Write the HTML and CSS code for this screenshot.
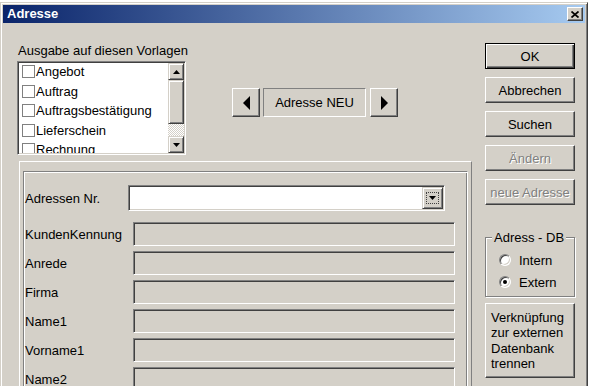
FILE: index.html
```html
<!DOCTYPE html>
<html lang="de">
<head>
  <meta charset="UTF-8">
  <title>Adresse</title>
  <link rel="stylesheet" href="styles.css">
</head>
<body>
  <div class="dialog">
    <div class="titlebar">
      <span class="title">Adresse</span>
      <button class="close">
        <svg width="8" height="7" viewBox="0 0 8 7"><path d="M0.5 0.5 L7.5 6.5 M7.5 0.5 L0.5 6.5" stroke="#000" stroke-width="1.7" fill="none"/></svg>
      </button>
    </div>

    <div class="client">
      <div class="main">
        <div class="top">
          <div class="vorlagen">
            <div class="caption">Ausgabe auf diesen Vorlagen</div>
            <div class="listbox">
              <div class="items">
                <div class="item"><span class="check"></span>Angebot</div>
                <div class="item"><span class="check"></span>Auftrag</div>
                <div class="item"><span class="check"></span>Auftragsbestätigung</div>
                <div class="item"><span class="check"></span>Lieferschein</div>
                <div class="item"><span class="check"></span>Rechnung</div>
              </div>
              <div class="scrollbar">
                <div class="sb-btn"><svg width="7" height="4" viewBox="0 0 7 4"><path d="M3.5 0 L7 4 L0 4 Z" fill="#000"/></svg></div>
                <div class="sb-thumb"></div>
                <div class="sb-track"></div>
                <div class="sb-btn"><svg width="7" height="4" viewBox="0 0 7 4"><path d="M0 0 L7 0 L3.5 4 Z" fill="#000"/></svg></div>
              </div>
            </div>
          </div>

          <div class="nav">
            <button class="nav-btn"><svg width="7" height="14" viewBox="0 0 7 14"><path d="M7 0 L7 14 L0 7 Z" fill="#000"/></svg></button>
            <div class="nav-label">Adresse NEU</div>
            <button class="nav-btn"><svg width="7" height="14" viewBox="0 0 7 14"><path d="M0 0 L7 7 L0 14 Z" fill="#000"/></svg></button>
          </div>
        </div>

        <div class="panel">
          <div class="panel-inner">
            <div class="row combo-row">
              <span class="label combo-label">Adressen Nr.</span>
              <div class="combo">
                <div class="combo-btn">
                  <span class="focus"><svg width="7" height="4" viewBox="0 0 7 4"><path d="M0 0 L7 0 L3.5 4 Z" fill="#000"/></svg></span>
                </div>
              </div>
            </div>
            <div class="row first"><span class="label">KundenKennung</span><div class="field"></div></div>
            <div class="row"><span class="label">Anrede</span><div class="field"></div></div>
            <div class="row"><span class="label">Firma</span><div class="field"></div></div>
            <div class="row"><span class="label">Name1</span><div class="field"></div></div>
            <div class="row"><span class="label">Vorname1</span><div class="field"></div></div>
            <div class="row"><span class="label">Name2</span><div class="field"></div></div>
          </div>
        </div>
      </div>

      <div class="side">
        <button class="btn default">OK</button>
        <button class="btn">Abbrechen</button>
        <button class="btn">Suchen</button>
        <button class="btn disabled">Ändern</button>
        <button class="btn disabled">neue Adresse</button>

        <fieldset class="group">
          <legend>Adress - DB</legend>
          <div class="radio-row"><span class="radio"></span>Intern</div>
          <div class="radio-row"><span class="radio checked"></span>Extern</div>
        </fieldset>

        <button class="btn multi">Verknüpfung<br>zur externen<br>Datenbank<br>trennen</button>
      </div>
    </div>
  </div>
</body>
</html>
```

FILE: styles.css
```css
* {
  box-sizing: border-box;
}
body {
  margin: 0;
  background: #fff;
  font-family: 'Liberation Sans', Arial, sans-serif;
  font-size: 13px;
  color: #000;
  overflow: hidden;
}
button {
  font: inherit;
  color: inherit;
  padding: 0;
}

/* window frame */
.dialog {
  margin-top: 2px;
  width: 588px;
  height: 400px;
  background: #d4d0c8;
  border: 1px solid;
  border-color: #d4d0c8 #404040 #404040 #d4d0c8;
  box-shadow: inset 1px 1px #fff, inset -1px -1px #808080;
  padding: 2px;
}
.titlebar {
  height: 18px;
  background: linear-gradient(to right, #0a246a, #a6caf0);
  display: flex;
  align-items: center;
  justify-content: space-between;
  padding: 0 2px 0 4px;
}
.title {
  color: #fff;
  font-weight: bold;
  line-height: 18px;
}
.close {
  width: 16px;
  height: 14px;
  background: #d4d0c8;
  border: 1px solid;
  border-color: #fff #404040 #404040 #fff;
  box-shadow: inset -1px -1px #808080;
  display: flex;
  align-items: center;
  justify-content: center;
}

.client {
  display: flex;
  padding: 20px 10px 0 14px;
}
.main {
  width: 455px;
}
.top {
  display: flex;
  align-items: flex-start;
}
.vorlagen {
  width: 169px;
}
.caption {
  line-height: 16px;
  margin-bottom: 2px;
  padding-left: 1px;
  white-space: nowrap;
}

/* list with checkboxes */
.listbox {
  height: 94px;
  display: flex;
  background: #fff;
  border: 1px solid;
  border-color: #808080 #fff #fff #808080;
  box-shadow: inset 1px 1px #404040, inset -1px -1px #d4d0c8;
  padding: 1px;
}
.items {
  flex: 1;
  overflow: hidden;
}
.item {
  height: 19.5px;
  display: flex;
  align-items: center;
  gap: 1px;
  padding-left: 3px;
  white-space: nowrap;
}
.item:first-child {
  margin-top: -1px;
}
.check {
  width: 13px;
  height: 13px;
  flex: none;
  border: 1px solid #808080;
  background: #fff;
}
.scrollbar {
  width: 16px;
  display: flex;
  flex-direction: column;
}
.sb-btn, .sb-thumb {
  background: #d4d0c8;
  border: 1px solid;
  border-color: #d4d0c8 #404040 #404040 #d4d0c8;
  box-shadow: inset 1px 1px #fff, inset -1px -1px #808080;
}
.sb-btn {
  height: 17px;
  display: flex;
  align-items: center;
  justify-content: center;
}
.sb-thumb {
  height: 44px;
}
.sb-track {
  flex: 1;
  background: repeating-conic-gradient(#fff 0 25%, #d4d0c8 0 50%) 0 0 / 2px 2px;
}

/* record navigation */
.nav {
  display: flex;
  margin: 45px 0 0 46px;
}
.nav-btn {
  width: 28px;
  height: 29px;
  background: #d4d0c8;
  border: 1px solid;
  border-color: #fff #404040 #404040 #fff;
  box-shadow: inset -1px -1px #808080;
  display: flex;
  align-items: center;
  justify-content: center;
}
.nav-label {
  width: 103px;
  height: 29px;
  margin: 0 4px 0 3px;
  border: 1px solid;
  border-color: #808080 #fff #fff #808080;
  display: flex;
  align-items: center;
  justify-content: center;
}

/* address panel */
.panel {
  margin: 6px 0 0 2px;
  width: 453px;
  height: 260px;
  border: 1px solid;
  border-color: #fff #808080 #808080 #fff;
  padding: 9px 3px 0 3px;
}
.panel-inner {
  height: 100%;
  border: 1px solid;
  border-color: #808080 #fff #fff #808080;
  box-shadow: inset 1px 1px #fff, inset -1px -1px #808080;
  padding: 13px 0 0 1px;
}
.row {
  display: flex;
  align-items: center;
  margin-top: 5px;
}
.row.combo-row {
  margin-top: 0;
}
.row.first {
  margin-top: 11px;
}
.label {
  width: 108px;
  flex: none;
}
.label.combo-label {
  width: 103px;
}
.combo, .field {
  border: 1px solid;
  border-color: #808080 #fff #fff #808080;
  box-shadow: inset 1px 1px #404040, inset -1px -1px #d4d0c8;
}
.combo {
  width: 317px;
  height: 26px;
  background: #fff;
  padding: 1px;
  display: flex;
  justify-content: flex-end;
}
.combo-btn {
  width: 21px;
  height: 22px;
  background: #d4d0c8;
  border: 1px solid;
  border-color: #d4d0c8 #404040 #404040 #d4d0c8;
  box-shadow: inset 1px 1px #fff, inset -1px -1px #808080;
  display: flex;
  align-items: center;
  justify-content: center;
}
.focus {
  width: 13px;
  height: 12px;
  border: 1px dotted #404040;
  display: flex;
  align-items: center;
  justify-content: center;
}
.field {
  width: 322px;
  height: 24px;
  background: #d4d0c8;
}

/* right-hand buttons */
.side {
  width: 90px;
  margin-left: 13px;
  display: flex;
  flex-direction: column;
}
.btn {
  height: 26px;
  margin-bottom: 8px;
  background: #d4d0c8;
  border: 1px solid;
  border-color: #fff #404040 #404040 #fff;
  box-shadow: inset -1px -1px #808080;
  display: flex;
  align-items: center;
  justify-content: center;
}
.btn.default {
  border-color: #000;
  box-shadow: inset 1px 1px #fff, inset -1px -1px #404040, inset -2px -2px #808080;
}
.btn.disabled {
  color: #808080;
  text-shadow: 1px 1px #fff;
}
.btn.multi {
  height: 75px;
  margin-top: 6px;
  justify-content: flex-start;
  text-align: left;
  line-height: 15.5px;
  padding-left: 5px;
}

.group {
  margin: 17px 0 0;
  padding: 4px 0 3px 6px;
  border: 1px solid #808080;
  box-shadow: inset 1px 1px #fff, 1px 1px #fff;
}
.group legend {
  padding: 0 2px;
  line-height: 15px;
  background: #d4d0c8;
}
.radio-row {
  height: 22px;
  display: flex;
  align-items: center;
  gap: 8px;
  padding-left: 7px;
}
.radio {
  width: 12px;
  height: 12px;
  border-radius: 50%;
  background: #fff;
  border: 1px solid;
  border-color: #808080 #fff #fff #808080;
  box-shadow: inset 1px 1px #404040, inset -1px -1px #d4d0c8;
  display: flex;
  align-items: center;
  justify-content: center;
}
.radio.checked::after {
  content: '';
  width: 4px;
  height: 4px;
  border-radius: 50%;
  background: #000;
}
```
